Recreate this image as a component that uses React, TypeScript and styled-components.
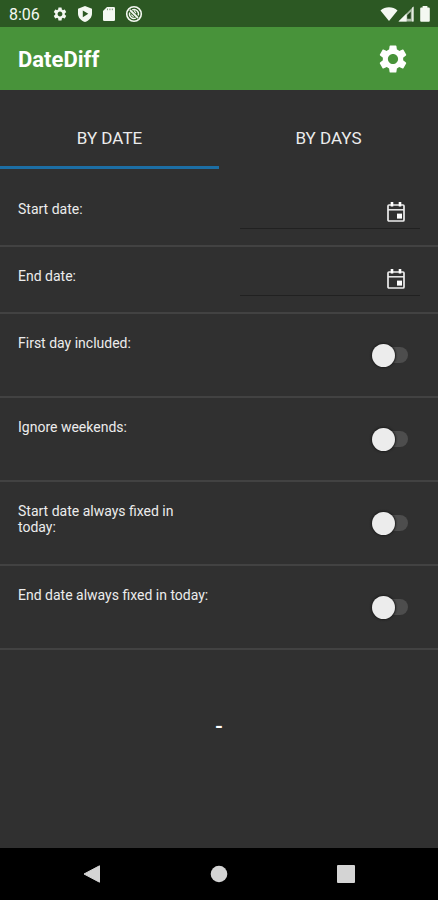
import React, { useState } from "react";
import styled, { createGlobalStyle } from "styled-components";
import { MdSettings } from "react-icons/md";

const GlobalStyle = createGlobalStyle`
  * { box-sizing: border-box; }
  body {
    margin: 0;
    background: #303030;
    color: #ececec;
    font-family: Roboto, "Liberation Sans", sans-serif;
  }
  button, input { font: inherit; color: inherit; }
`;

const Screen = styled.div`
  display: flex;
  flex-direction: column;
  min-height: 100vh;
`;

const StatusBar = styled.div`
  display: flex;
  align-items: center;
  justify-content: space-between;
  height: 27px;
  padding: 1px 8px 0 9px;
  background: #2c5823;
  color: #f4f8f2;
  font-size: 16px;
`;

const StatusGroup = styled.div<{ $gap: number }>`
  display: flex;
  align-items: center;
  gap: ${(p) => p.$gap}px;
  svg { display: block; }
`;

const StatusTime = styled.span`
  margin-right: 3px;
`;

const Reception = styled.span`
  display: flex;
`;

const AppBar = styled.header`
  display: flex;
  align-items: center;
  justify-content: space-between;
  height: 63px;
  padding: 0 28px 0 18px;
  background: #48933a;
  color: #fff;
`;

const Title = styled.h1`
  margin: 0;
  padding-top: 2px;
  font-size: 22px;
  line-height: 28px;
  font-weight: 700;
`;

const IconButton = styled.button`
  display: flex;
  padding: 0;
  border: 0;
  background: none;
  cursor: pointer;
`;

const TabList = styled.div`
  display: grid;
  grid-template-columns: 1fr 1fr;
  margin-top: 20px;
`;

const Tab = styled.button<{ $active: boolean }>`
  height: 59px;
  padding: 0;
  border: 0;
  border-bottom: 3px solid ${(p) => (p.$active ? "#1c6ea4" : "transparent")};
  background: none;
  font-size: 17px;
  line-height: 24px;
  cursor: pointer;
`;

const Form = styled.form`
  padding-top: 11px;
`;

const Row = styled.div<{ $tall?: boolean }>`
  display: grid;
  grid-template-columns: minmax(0, 52fr) minmax(0, 48fr);
  column-gap: 26px;
  min-height: ${(p) => (p.$tall ? 84 : 67)}px;
  padding: 0 18px;
  border-bottom: 2px solid #424242;
`;

const Label = styled.label`
  padding: 21px 3px 0 0;
  font-size: 14px;
  line-height: 16px;
`;

const DateField = styled.div`
  display: flex;
  align-items: flex-end;
  align-self: start;
  height: 35px;
  margin-top: 14px;
  padding: 0 14px 5px 0;
  border-bottom: 1px solid #212121;
`;

const DateInput = styled.input`
  flex: 1;
  min-width: 0;
  padding: 0 4px;
  border: 0;
  outline: 0;
  background: none;
  font-size: 14px;
`;

const Switch = styled.input`
  appearance: none;
  display: flex;
  align-items: center;
  align-self: center;
  justify-self: end;
  width: 36px;
  height: 16px;
  margin: 0 12px 0 0;
  border-radius: 8px;
  background: #4d4d4d;
  cursor: pointer;

  &::before {
    content: "";
    width: 23px;
    height: 23px;
    border-radius: 50%;
    background: #ececec;
    box-shadow: 0 0 2px 1px #1c1c1c;
  }

  &:checked { background: #2f5f28; }
  &:checked::before { margin-left: 13px; background: #48933a; }
`;

const Result = styled.output`
  display: flex;
  flex: 1;
  justify-content: center;
  padding-top: 64px;
  font-size: 22px;
  line-height: 26px;
  font-weight: 500;
  color: #fff;
`;

const NavBar = styled.nav`
  display: grid;
  grid-template-columns: repeat(3, 1fr);
  height: 52px;
  padding: 0 29px;
  background: #000;
`;

const NavButton = styled(IconButton)`
  align-items: center;
  justify-content: center;
`;

const ShieldIcon = () => (
  <svg width="16" height="18" viewBox="0 0 16 18" aria-hidden="true">
    <path
      fillRule="evenodd"
      fill="currentColor"
      d="M8 1 15 3.7V8.5C15 12.6 12 15.7 8 17 4 15.7 1 12.6 1 8.5V3.7ZM5.8 5.4V12.2L11.3 8.8Z"
    />
  </svg>
);

const SdCardIcon = () => (
  <svg width="14" height="16" viewBox="0 0 14 16" aria-hidden="true">
    <path fill="currentColor" d="M5 1H11.7A1.3 1.3 0 0 1 13 2.3V13.7A1.3 1.3 0 0 1 11.7 15H2.3A1.3 1.3 0 0 1 1 13.7V5Z" />
    <path stroke="#2c5823" strokeOpacity=".6" strokeWidth="1" d="M5.5 2.6V4.2M7.9 2.6V4.2M10.3 2.6V4.2" />
  </svg>
);

const NoSyncIcon = () => (
  <svg width="18" height="18" viewBox="0 0 18 18" fill="none" stroke="currentColor" aria-hidden="true">
    <circle cx="9" cy="9" r="7.3" strokeWidth="1.6" />
    <path strokeWidth="1.8" d="M5 5 13 13" />
    <path strokeWidth="1.4" d="M7.2 4.9A4.5 4.5 0 0 1 13.2 10.6M4.8 7.4A4.5 4.5 0 0 0 10.8 13.1" />
    <path strokeWidth="1.1" d="M9 5.4 11 8.2M6.2 9.6 8.6 11.8" />
  </svg>
);

const WifiIcon = () => (
  <svg width="18" height="16" viewBox="0 0 18 16" aria-hidden="true">
    <path fill="currentColor" d="M.5 4.6C5.2.2 12.8.2 17.5 4.6L9 15Z" />
  </svg>
);

const SignalIcon = () => (
  <svg width="16" height="16" viewBox="0 0 16 16" aria-hidden="true">
    <path fill="#a9bca5" d="M15.5.5V15.5H.5Z" />
    <path fill="#1f3f19" d="M12.8 5.8V12.8H9.2V9.2Z" />
    <path fill="currentColor" d="M8.6 7.4V15.5H.5ZM14.2 1.8 15.5.5V15.5H14.2Z" />
  </svg>
);

const BatteryIcon = () => (
  <svg width="10" height="16" viewBox="0 0 10 16" aria-hidden="true">
    <path fill="currentColor" d="M2.6 0H7.4V1.4H8.8A1 1 0 0 1 9.8 2.4V14.8A1 1 0 0 1 8.8 15.8H1.2A1 1 0 0 1 .2 14.8V2.4A1 1 0 0 1 1.2 1.4H2.6Z" />
  </svg>
);

const CalendarIcon = () => (
  <svg width="20" height="22" viewBox="0 0 20 22" aria-hidden="true">
    <rect x="2" y="4" width="16" height="16" rx="1" fill="none" stroke="#ececec" strokeWidth="1.7" />
    <path stroke="#ececec" strokeWidth="1.5" d="M2 8.8H18" />
    <path stroke="#fff" strokeWidth="2.6" d="M6 1V5.5M14 1V5.5" />
    <rect x="11" y="12.6" width="5" height="5" fill="#fff" />
  </svg>
);

const dateRows = [
  { id: "start-date", label: "Start date:" },
  { id: "end-date", label: "End date:" },
];

const switchRows = [
  { id: "first-day", label: "First day included:" },
  { id: "weekends", label: "Ignore weekends:" },
  { id: "start-today", label: "Start date always fixed in today:" },
  { id: "end-today", label: "End date always fixed in today:" },
];

const tabs = ["BY DATE", "BY DAYS"];

export default function App() {
  const [activeTab, setActiveTab] = useState(tabs[0]);

  return (
    <Screen>
      <GlobalStyle />
      <StatusBar>
        <StatusGroup $gap={9}>
          <StatusTime>8:06</StatusTime>
          <MdSettings size={16} />
          <ShieldIcon />
          <SdCardIcon />
          <NoSyncIcon />
        </StatusGroup>
        <StatusGroup $gap={6}>
          <Reception>
            <WifiIcon />
            <SignalIcon />
          </Reception>
          <BatteryIcon />
        </StatusGroup>
      </StatusBar>
      <AppBar>
        <Title>DateDiff</Title>
        <IconButton type="button" aria-label="Settings">
          <MdSettings size={34} />
        </IconButton>
      </AppBar>
      <TabList role="tablist">
        {tabs.map((tab) => (
          <Tab
            key={tab}
            type="button"
            role="tab"
            aria-selected={tab === activeTab}
            $active={tab === activeTab}
            onClick={() => setActiveTab(tab)}
          >
            {tab}
          </Tab>
        ))}
      </TabList>
      <Form>
        {dateRows.map((row) => (
          <Row key={row.id}>
            <Label htmlFor={row.id}>{row.label}</Label>
            <DateField>
              <DateInput id={row.id} type="text" />
              <IconButton type="button" aria-label="Pick a date">
                <CalendarIcon />
              </IconButton>
            </DateField>
          </Row>
        ))}
        {switchRows.map((row) => (
          <Row key={row.id} $tall>
            <Label htmlFor={row.id}>{row.label}</Label>
            <Switch id={row.id} type="checkbox" role="switch" />
          </Row>
        ))}
      </Form>
      <Result>-</Result>
      <NavBar>
        <NavButton type="button" aria-label="Back">
          <svg width="18" height="18" viewBox="0 0 18 18" aria-hidden="true">
            <path fill="#d4d4d4" stroke="#d4d4d4" strokeLinejoin="round" d="M1 9 16.5.8V17.2Z" />
          </svg>
        </NavButton>
        <NavButton type="button" aria-label="Home">
          <svg width="18" height="18" viewBox="0 0 18 18" aria-hidden="true">
            <circle cx="9" cy="9" r="8.3" fill="#d4d4d4" />
          </svg>
        </NavButton>
        <NavButton type="button" aria-label="Recent apps">
          <svg width="18" height="18" viewBox="0 0 18 18" aria-hidden="true">
            <rect width="18" height="18" rx="1" fill="#d4d4d4" />
          </svg>
        </NavButton>
      </NavBar>
    </Screen>
  );
}
